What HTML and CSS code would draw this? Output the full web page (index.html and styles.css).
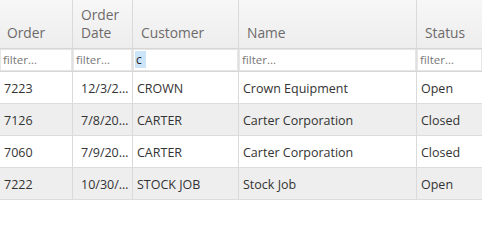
FILE: index.html
```html
<!DOCTYPE html>
<html>
<head>
<meta charset="utf-8">
<link rel="stylesheet" href="styles.css">
</head>
<body>
<div class="grid">
  <div class="row head">
    <div class="hc c0">Order</div>
    <div class="hc c1">Order<br>Date</div>
    <div class="hc c2">Customer</div>
    <div class="hc c3">Name</div>
    <div class="hc c4">Status</div>
  </div>
  <div class="row filters">
    <div class="fc"><div class="inp ph">filter...</div></div>
    <div class="fc"><div class="inp ph">filter...</div></div>
    <div class="fc"><div class="inp focus"><span class="sel">c</span></div></div>
    <div class="fc"><div class="inp ph">filter...</div></div>
    <div class="fc"><div class="inp ph">filter...</div></div>
  </div>
  <div class="row data">
    <div class="dc">7223</div>
    <div class="dc date">12/3/2017</div>
    <div class="dc">CROWN</div>
    <div class="dc">Crown Equipment</div>
    <div class="dc">Open</div>
  </div>
  <div class="row data alt">
    <div class="dc">7126</div>
    <div class="dc date">7/8/2017</div>
    <div class="dc">CARTER</div>
    <div class="dc">Carter Corporation</div>
    <div class="dc">Closed</div>
  </div>
  <div class="row data">
    <div class="dc">7060</div>
    <div class="dc date">7/9/2017</div>
    <div class="dc">CARTER</div>
    <div class="dc">Carter Corporation</div>
    <div class="dc">Closed</div>
  </div>
  <div class="row data alt">
    <div class="dc">7222</div>
    <div class="dc date">10/30/2017</div>
    <div class="dc">STOCK JOB</div>
    <div class="dc">Stock Job</div>
    <div class="dc">Open</div>
  </div>
</div>
</body>
</html>
```

FILE: styles.css
```css
html, body {
  margin: 0;
  padding: 0;
  background: #ffffff;
  overflow: hidden;
}
body {
  font-family: "Open Sans", "Noto Sans", "Liberation Sans", sans-serif;
  width: 482px;
  height: 201px;
}
.grid {
  width: 482px;
}
.row {
  display: grid;
  grid-template-columns: 73px 60px 106px 178px 65px;
}
.row > div {
  box-sizing: border-box;
  border-right: 1px solid #dadada;
  min-width: 0;
}
.row > div:last-child {
  border-right: none;
}
.head {
  height: 49px;
  background: linear-gradient(#f7f7f7, #ededed);
  border-bottom: 1px solid #d6d6d6;
  box-sizing: border-box;
}
.hc {
  display: flex;
  align-items: flex-end;
  padding: 0 4px 6px 8px;
  font-size: 13.8px;
  line-height: 18px;
  color: #6e6a6a;
}
.hc.c0 { padding-left: 7px; }
.filters {
  height: 22px;
  background: #e6e6e6;
  border-bottom: 1px solid #d6d6d6;
}
.filters > div {
  border-right-color: #e0e0e0;
}
.fc {
  padding: 1px;
  display: flex;
}
.inp {
  flex: 1;
  background: #ffffff;
  font-size: 11.5px;
  line-height: 20px;
  padding: 0 2px;
  overflow: hidden;
  white-space: nowrap;
}
.ph {
  color: #777777;
}
.focus {
  color: #222;
  font-size: 12px;
  padding: 0 0 0 1px;
}
.sel {
  background: #cce4f7;
  padding: 0 4px 0 1px;
  display: inline-block;
  line-height: 17px;
  margin-top: 1px;
  vertical-align: top;
}
.data {
  height: 32px;
  border-bottom: 1px solid #dcdcdc;
  box-sizing: border-box;
}
.data.alt {
  background: #eeeeee;
}
.dc {
  padding: 1px 4px 0 4px;
  font-size: 12.5px;
  line-height: 31px;
  color: #333333;
  white-space: nowrap;
  overflow: hidden;
  text-overflow: ellipsis;
}
.dc.date {
  padding: 1px 3px 0 8px;
}
```
